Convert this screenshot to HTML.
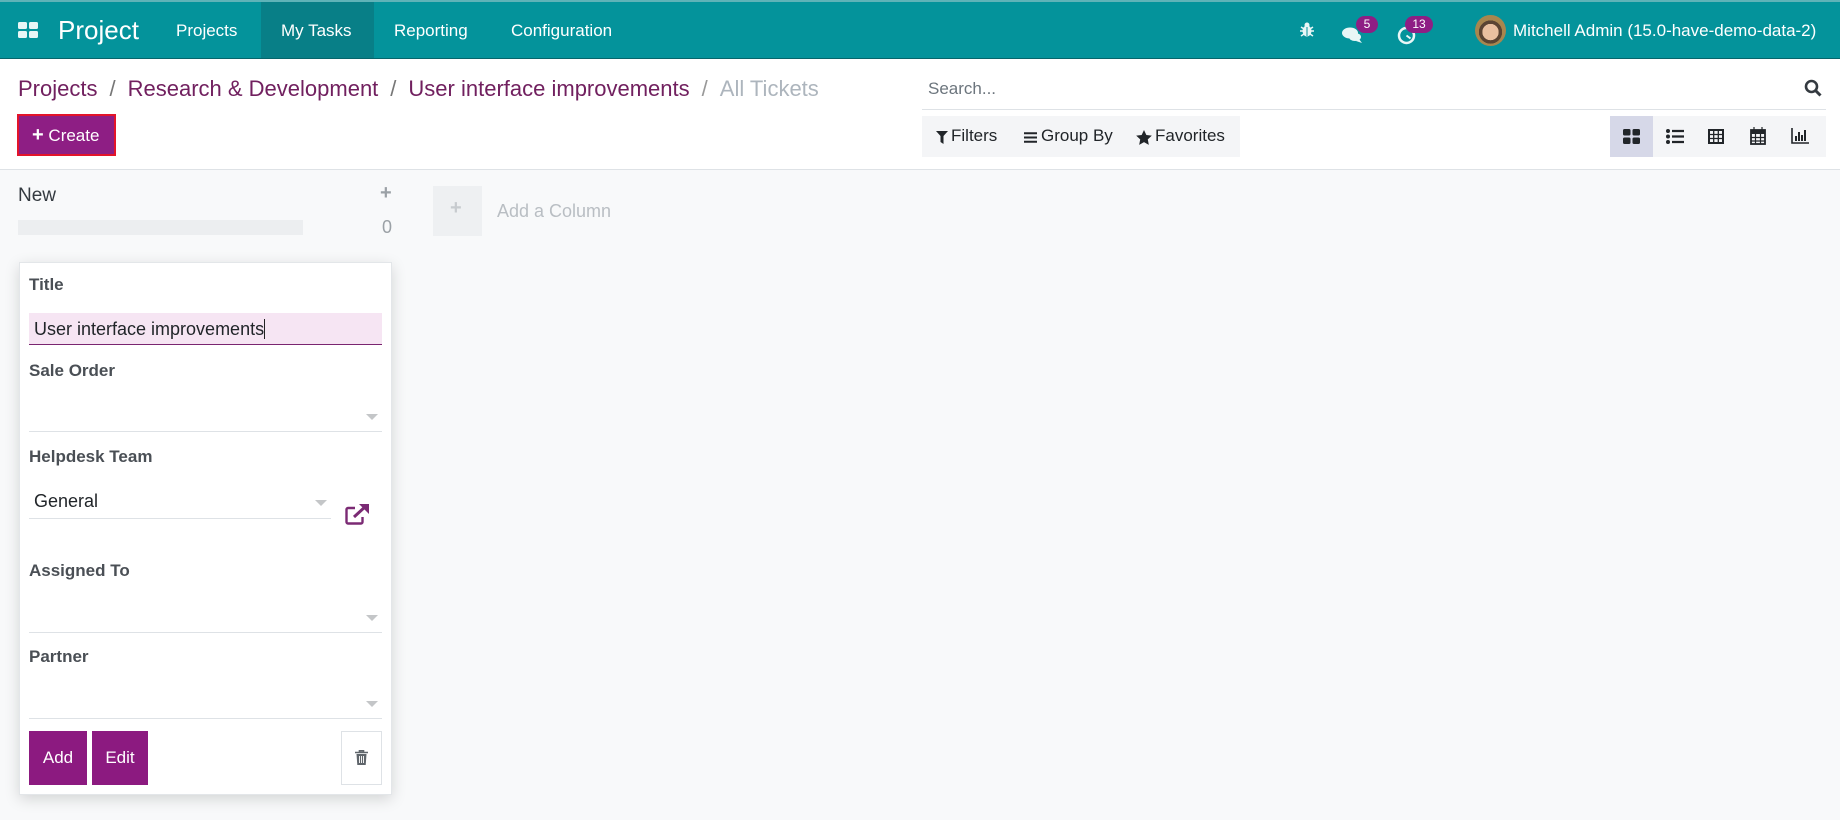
<!DOCTYPE html>
<html><head><meta charset="utf-8"><style>
*{box-sizing:border-box;margin:0;padding:0}
body{width:1840px;height:820px;overflow:hidden;background:#f8f9fa;font-family:"Liberation Sans",sans-serif;position:relative;color:#212529}
.a{position:absolute;white-space:nowrap}
.nav{position:absolute;left:0;top:0;width:1840px;height:59px;background:#04939b;border-top:2px solid #5fb3b8;border-bottom:1px solid #07656b}
.nav .a{color:#fff;font-size:17px}
.top{position:absolute;left:0;top:59px;width:1840px;height:111px;background:#fff;border-bottom:1px solid #dee2e6}
.bc{font-size:22px;color:#71205f}
.bc .s{margin:0 12px;color:#777}
.lbl{font-size:17px;font-weight:bold;color:#4a4f55}
.ul{position:absolute;height:1px;background:#dee2e6}
.arr{position:absolute;width:0;height:0;border-left:6px solid transparent;border-right:6px solid transparent;border-top:6px solid #c4c6c8}
.btn{position:absolute;background:#8c1a80;color:#fff;font-size:17px;text-align:center}
</style></head><body>
<div class="nav">
 <svg class="a" style="left:18px;top:20px" width="20" height="16" viewBox="0 0 20 16"><rect x="0" y="0" width="9" height="7" rx="1.5" fill="#e8f6f6"/><rect x="11" y="0" width="9" height="7" rx="1.5" fill="#e8f6f6"/><rect x="0" y="9" width="9" height="7" rx="1.5" fill="#e8f6f6"/><rect x="11" y="9" width="9" height="7" rx="1.5" fill="#e8f6f6"/></svg>
 <div class="a" style="left:58px;top:13px;font-size:26px">Project</div>
 <div class="a" style="left:176px;top:19px">Projects</div>
 <div class="a" style="left:261px;top:0;width:113px;height:56px;background:#087f87"></div>
 <div class="a" style="left:281px;top:19px">My Tasks</div>
 <div class="a" style="left:394px;top:19px">Reporting</div>
 <div class="a" style="left:511px;top:19px">Configuration</div>
 <svg class="a" style="left:1300px;top:20px" width="14" height="15" viewBox="0 0 14 15"><ellipse cx="7" cy="9" rx="4.5" ry="5.5" fill="#e8f6f6"/><circle cx="7" cy="3" r="2.5" fill="#e8f6f6"/><path d="M1 5l3 2M13 5l-3 2M0 9h3M14 9h-3M1 14l3-2M13 14l-3-2" stroke="#e8f6f6" stroke-width="1.5"/><path d="M7 5v9" stroke="#04939b" stroke-width="1"/></svg>
 <svg class="a" style="left:1341px;top:25px" width="22" height="16" viewBox="0 0 22 16"><ellipse cx="9" cy="6" rx="8" ry="5.5" fill="#e8f6f6"/><ellipse cx="14" cy="10" rx="6" ry="4" fill="#e8f6f6"/><path d="M18 12l3 4-6-2z" fill="#e8f6f6"/></svg>
 <div class="a" style="left:1356px;top:14px;width:22px;height:17px;border-radius:9px;background:#8e1e84;font-size:12px;text-align:center;line-height:17px">5</div>
 <svg class="a" style="left:1397px;top:24px" width="19" height="19" viewBox="0 0 19 19"><circle cx="9.5" cy="9.5" r="7.5" fill="none" stroke="#e8f6f6" stroke-width="2.5"/><path d="M9.5 9.5l4 3" stroke="#e8f6f6" stroke-width="2"/></svg>
 <div class="a" style="left:1405px;top:14px;width:28px;height:17px;border-radius:9px;background:#8e1e84;font-size:12px;text-align:center;line-height:17px">13</div>
 <div class="a" style="left:1475px;top:13px;width:31px;height:31px;border-radius:50%;background:radial-gradient(circle at 50% 55%,#e9c0a0 0 35%,#5a4433 36% 50%,#a8864e 51%)"></div>
 <div class="a" style="left:1513px;top:19px">Mitchell Admin (15.0-have-demo-data-2)</div>
</div>
<div class="top">
 <div class="a bc" style="left:18px;top:17px">Projects<span class="s">/</span>Research &amp; Development<span class="s">/</span>User interface improvements<span class="s" style="color:#999">/</span><span style="color:#adb5bd">All Tickets</span></div>
 <div class="a" style="left:17px;top:55px;width:99px;height:42px;background:#8e1e84;border:2px solid #e3142a;color:#fff;font-size:17px;line-height:38px;padding-left:13px"><b style="font-size:20px">+</b> Create</div>
 <div class="a" style="left:928px;top:20px;font-size:17px;color:#6c757d">Search...</div>
 <svg class="a" style="left:1804px;top:20px" width="18" height="18" viewBox="0 0 18 18"><circle cx="7.5" cy="7.5" r="5.5" fill="none" stroke="#343a40" stroke-width="2.6"/><path d="M11.5 11.5l5 5" stroke="#343a40" stroke-width="3"/></svg>
 <div class="ul" style="left:922px;top:50px;width:904px"></div>
 <div class="a" style="left:922px;top:57px;width:318px;height:41px;background:#f4f5f7"></div>
 <svg class="a" style="left:936px;top:72px" width="12" height="13" viewBox="0 0 12 13"><path d="M0 0h12L7.5 5v8L4.5 11V5z" fill="#212529"/></svg>
 <div class="a" style="left:951px;top:67px;font-size:17px">Filters</div>
 <svg class="a" style="left:1024px;top:73px" width="13" height="11" viewBox="0 0 13 11"><path d="M0 1.2h13M0 5.5h13M0 9.8h13" stroke="#212529" stroke-width="2"/></svg>
 <div class="a" style="left:1041px;top:67px;font-size:17px">Group By</div>
 <svg class="a" style="left:1136px;top:71px" width="16" height="15" viewBox="0 0 24 23"><path d="M12 0l3.6 7.6 8.4 1-6.2 5.8 1.6 8.4L12 18.6 4.6 22.8l1.6-8.4L0 8.6l8.4-1z" fill="#212529"/></svg>
 <div class="a" style="left:1155px;top:67px;font-size:17px">Favorites</div>
 <div class="a" style="left:1610px;top:57px;width:216px;height:41px;background:#f4f5f7"></div>
 <div class="a" style="left:1610px;top:57px;width:43px;height:41px;background:#d6d8e8"></div>
 <svg class="a" style="left:1623px;top:70px" width="17" height="15" viewBox="0 0 17 15"><rect width="7.5" height="6.5" rx="1.5" fill="#212529"/><rect x="9.5" width="7.5" height="6.5" rx="1.5" fill="#212529"/><rect y="8.5" width="7.5" height="6.5" rx="1.5" fill="#212529"/><rect x="9.5" y="8.5" width="7.5" height="6.5" rx="1.5" fill="#212529"/></svg>
 <svg class="a" style="left:1666px;top:70px" width="18" height="15" viewBox="0 0 18 15"><circle cx="2" cy="2" r="2" fill="#212529"/><circle cx="2" cy="7.5" r="2" fill="#212529"/><circle cx="2" cy="13" r="2" fill="#212529"/><path d="M6 2h12M6 7.5h12M6 13h12" stroke="#212529" stroke-width="2.2"/></svg>
 <svg class="a" style="left:1708px;top:70px" width="16" height="15" viewBox="0 0 16 15"><rect x="1" y="1" width="14" height="13" fill="none" stroke="#212529" stroke-width="2"/><path d="M1 5.5h14M1 9.5h14M5.7 1v13M10.3 1v13" stroke="#212529" stroke-width="1.3"/></svg>
 <svg class="a" style="left:1750px;top:68px" width="16" height="18" viewBox="0 0 16 18"><rect x="1" y="3" width="14" height="14" fill="none" stroke="#212529" stroke-width="1.8"/><rect x="1" y="3" width="14" height="4" fill="#212529"/><path d="M4 0v4M12 0v4M1 10.5h14M1 14h14M5.5 7v10M10.5 7v10" stroke="#212529" stroke-width="1.2"/></svg>
 <svg class="a" style="left:1791px;top:69px" width="18" height="16" viewBox="0 0 18 16"><path d="M1 0v15h17" stroke="#212529" stroke-width="1.6" fill="none"/><path d="M5 13V8M8 13V4M11 13V7M14 13V2" stroke="#212529" stroke-width="2"/></svg>
</div>
<div class="a" style="left:18px;top:185px;font-size:19px;color:#343a40">New</div>
<div class="a" style="left:18px;top:220px;width:285px;height:15px;background:#eceef0"></div>
<div class="a" style="left:380px;top:182px;font-size:20px;font-weight:bold;color:#9ba1a6">+</div>
<div class="a" style="left:382px;top:217px;font-size:18px;color:#9ba1a6">0</div>
<div class="a" style="left:433px;top:186px;width:49px;height:50px;background:#eef0f2"></div>
<div class="a" style="left:450px;top:197px;font-size:20px;font-weight:bold;color:#c7cbcf">+</div>
<div class="a" style="left:497px;top:201px;font-size:18px;color:#b9bec3">Add a Column</div>
<div class="a" style="left:19px;top:262px;width:373px;height:533px;background:#fff;border:1px solid #e3e6e9;box-shadow:0 4px 14px rgba(0,0,0,.15)"></div>
<div class="a lbl" style="left:29px;top:275px">Title</div>
<div class="a" style="left:29px;top:313px;width:353px;height:32px;background:#f6e5f3;border-bottom:1px solid #7a2570"></div>
<div class="a" style="left:34px;top:319px;font-size:18px;color:#212529">User interface improvements<span style="display:inline-block;width:1px;height:20px;background:#222;vertical-align:-4px"></span></div>
<div class="a lbl" style="left:29px;top:361px">Sale Order</div>
<div class="arr" style="left:366px;top:414px"></div>
<div class="ul" style="left:29px;top:431px;width:353px"></div>
<div class="a lbl" style="left:29px;top:447px">Helpdesk Team</div>
<div class="a" style="left:34px;top:491px;font-size:18px;color:#212529">General</div>
<div class="arr" style="left:315px;top:500px"></div>
<div class="ul" style="left:29px;top:518px;width:302px"></div>
<svg class="a" style="left:345px;top:503px" width="25" height="22" viewBox="0 0 25 22"><path d="M10 5H3a1.5 1.5 0 0 0-1.5 1.5V19A1.5 1.5 0 0 0 3 20.5h13a1.5 1.5 0 0 0 1.5-1.5v-5" fill="none" stroke="#7b2a74" stroke-width="2.4"/><path d="M9 14L21 3" stroke="#7b2a74" stroke-width="3"/><path d="M14 1h10v10z" fill="#7b2a74"/></svg>
<div class="a lbl" style="left:29px;top:561px">Assigned To</div>
<div class="arr" style="left:366px;top:615px"></div>
<div class="ul" style="left:29px;top:632px;width:353px"></div>
<div class="a lbl" style="left:29px;top:647px">Partner</div>
<div class="arr" style="left:366px;top:701px"></div>
<div class="ul" style="left:29px;top:718px;width:353px"></div>
<div class="btn" style="left:29px;top:731px;width:58px;height:54px;line-height:54px">Add</div>
<div class="btn" style="left:92px;top:731px;width:56px;height:54px;line-height:54px">Edit</div>
<div class="a" style="left:341px;top:731px;width:41px;height:54px;border:1px solid #dee2e6;background:#fff"></div>
<svg class="a" style="left:355px;top:750px" width="13" height="15" viewBox="0 0 13 15"><path d="M0 2.5h13M4.5 2.5V0.8h4v1.7" stroke="#5f656b" stroke-width="1.6" fill="none"/><path d="M1.5 4h10l-0.8 11H2.3z" fill="#5f656b"/><path d="M4.5 6v7M6.5 6v7M8.5 6v7" stroke="#fff" stroke-width="0.9"/></svg>
</body></html>
